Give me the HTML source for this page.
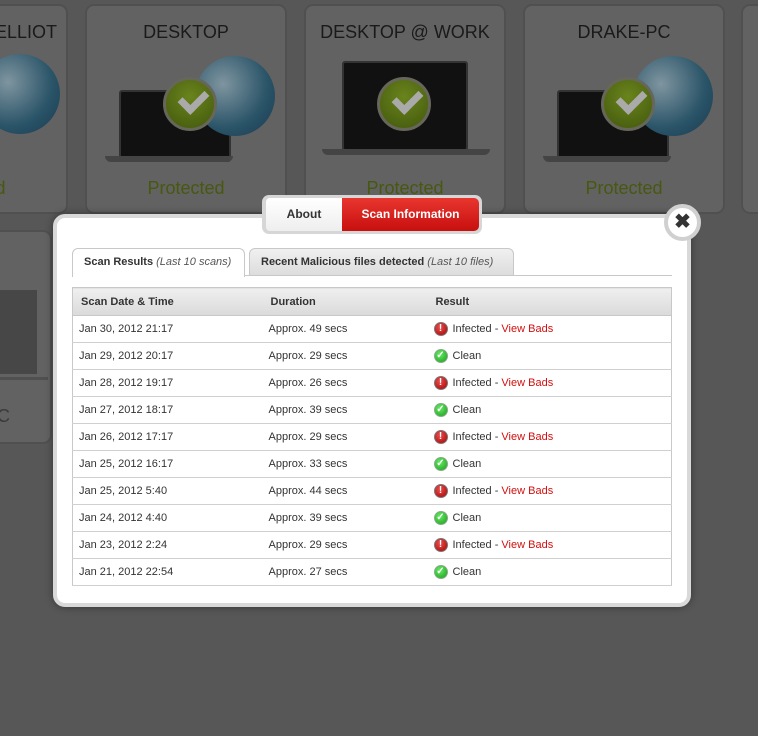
<!DOCTYPE html>
<html><head><meta charset="utf-8"><style>
*{margin:0;padding:0;box-sizing:border-box}
body{width:758px;height:736px;overflow:hidden;background:#575757;font-family:"Liberation Sans",Arial,sans-serif;position:relative}
.card{position:absolute;top:4px;width:202px;height:210px;border:2px solid #505050;border-radius:9px;background:#626262}
.card h3{position:absolute;top:16px;width:100%;text-align:center;font-weight:normal;font-size:18px;color:#1a1a1a}
.card .st{position:absolute;top:172px;width:100%;text-align:center;font-size:18px;color:#475810}
.lap{position:absolute;width:112px;height:72px;background:#111;border:2px solid #333;border-radius:3px}
.base{position:absolute;height:6px;background:#444;border-radius:0 0 6px 6px}
.glb{position:absolute;width:80px;height:80px;border-radius:50%;background:radial-gradient(circle at 35% 35%,#7f95a0,#2a5468 60%,#193a50)}
.chk{position:absolute;width:54px;height:54px;border-radius:50%;background:radial-gradient(circle at 50% 35%,#6a841c,#42570d);border:3px solid #66665a}
.chk:after{content:"";position:absolute;left:14px;top:10px;width:20px;height:11px;border-left:7px solid #aaa;border-bottom:7px solid #aaa;transform:rotate(-45deg)}
.modal{position:absolute;left:53px;top:214px;width:638px;height:393px;background:#fff;border:4px solid #d9d9d9;border-radius:12px;box-shadow:0 0 8px rgba(0,0,0,.4)}
.tabs{position:absolute;left:262px;top:195px;width:220px;height:39px;background:#d6d6d6;border-radius:7px;padding:3px}
.ab{position:absolute;left:4px;top:3px;width:76px;height:33px;background:linear-gradient(#fff,#eee);border-radius:4px 0 0 4px;text-align:center;line-height:33px;font-weight:bold;font-size:12px;color:#333}
.si{position:absolute;left:80px;top:3px;width:137px;height:33px;background:linear-gradient(#e8362e,#c80f0f);border-radius:0 5px 5px 0;text-align:center;line-height:33px;font-weight:bold;font-size:12px;color:#fff}
.close{position:absolute;left:664px;top:204px;width:37px;height:37px;border-radius:50%;background:#fff;border:4px solid #d0d0d0;text-align:center;line-height:28px;font-size:20px;font-weight:bold;color:#333}
.t1,.t2{position:absolute;top:248px;height:28px;border:1px solid #c8c8c8;border-bottom:none;border-radius:6px 6px 0 0;font-size:11px;font-weight:bold;color:#333;line-height:26px;padding-left:11px;white-space:nowrap}
.t1{left:72px;width:173px;background:#fff;height:29px;z-index:2}
.t2{left:249px;width:265px;background:linear-gradient(#f0f0f0,#dcdcdc)}
i{font-weight:normal;color:#555}
.tline{position:absolute;left:72px;top:275px;width:600px;height:1px;background:#c8c8c8}
table{position:absolute;left:72px;top:287px;width:600px;border-collapse:collapse;border:1px solid #c8c8c8;font-size:11px;color:#333}
th{height:28px;text-align:left;background:linear-gradient(#efefef,#dadada);font-weight:bold;padding-left:8px;border-bottom:1px solid #c8c8c8}
td{height:27px;padding-left:6px;border-bottom:1px solid #d0d0d0;vertical-align:middle}
.ic{display:inline-block;width:14px;height:14px;border-radius:50%;vertical-align:middle;margin-right:5px;text-align:center;color:#fff;font-size:10px;line-height:12px;font-weight:bold}
.bad{background:radial-gradient(circle at 40% 35%,#e85050,#a00);border:1px solid #777}
.ok{background:radial-gradient(circle at 40% 35%,#6e6,#1a9a1a);border:1px solid #8a8}
a{color:#d01010;text-decoration:none}
</style></head><body>
<div class="card" style="left:-134px"><h3 style="text-align:left;padding-left:127px">ELLIOT</h3><div class="glb" style="left:112px;top:48px"></div><div class="st">Protected</div></div>
<div class="card" style="left:85px"><h3>DESKTOP</h3><div class="lap" style="left:32px;top:84px"></div><div class="base" style="left:18px;top:150px;width:128px"></div><div class="glb" style="left:108px;top:50px"></div><div class="chk" style="left:76px;top:71px"></div><div class="st">Protected</div></div>
<div class="card" style="left:304px"><h3>DESKTOP @ WORK</h3><div class="lap" style="left:36px;top:55px;width:126px;height:90px"></div><div class="base" style="left:16px;top:143px;width:168px"></div><div class="chk" style="left:71px;top:71px"></div><div class="st">Protected</div></div>
<div class="card" style="left:523px"><h3>DRAKE-PC</h3><div class="lap" style="left:32px;top:84px"></div><div class="base" style="left:18px;top:150px;width:128px"></div><div class="glb" style="left:108px;top:50px"></div><div class="chk" style="left:76px;top:71px"></div><div class="st">Protected</div></div>
<div class="card" style="left:741px"></div>
<div class="card" style="left:-150px;top:230px;width:202px;height:214px"><div style="position:absolute;left:140px;top:58px;width:45px;height:84px;background:#474747"></div><div style="position:absolute;left:136px;top:145px;width:60px;height:3px;background:#505050"></div><div class="st" style="top:174px;left:145px;width:20px;color:#3a3a3a;text-align:left">C</div></div>
<div class="modal"></div>
<div class="tabs"><div class="ab">About</div><div class="si">Scan Information</div></div>
<div class="close">✖</div>
<div class="t1">Scan Results <i>(Last 10 scans)</i></div>
<div class="t2">Recent Malicious files detected <i>(Last 10 files)</i></div>
<div class="tline"></div>
<table>
<tr><th style="width:190px">Scan Date &amp; Time</th><th style="width:165px">Duration</th><th>Result</th></tr>
<tr><td>Jan 30, 2012 21:17</td><td>Approx. 49 secs</td><td><span class="ic bad">!</span>Infected - <a>View Bads</a></td></tr>
<tr><td>Jan 29, 2012 20:17</td><td>Approx. 29 secs</td><td><span class="ic ok">✓</span>Clean</td></tr>
<tr><td>Jan 28, 2012 19:17</td><td>Approx. 26 secs</td><td><span class="ic bad">!</span>Infected - <a>View Bads</a></td></tr>
<tr><td>Jan 27, 2012 18:17</td><td>Approx. 39 secs</td><td><span class="ic ok">✓</span>Clean</td></tr>
<tr><td>Jan 26, 2012 17:17</td><td>Approx. 29 secs</td><td><span class="ic bad">!</span>Infected - <a>View Bads</a></td></tr>
<tr><td>Jan 25, 2012 16:17</td><td>Approx. 33 secs</td><td><span class="ic ok">✓</span>Clean</td></tr>
<tr><td>Jan 25, 2012 5:40</td><td>Approx. 44 secs</td><td><span class="ic bad">!</span>Infected - <a>View Bads</a></td></tr>
<tr><td>Jan 24, 2012 4:40</td><td>Approx. 39 secs</td><td><span class="ic ok">✓</span>Clean</td></tr>
<tr><td>Jan 23, 2012 2:24</td><td>Approx. 29 secs</td><td><span class="ic bad">!</span>Infected - <a>View Bads</a></td></tr>
<tr><td>Jan 21, 2012 22:54</td><td>Approx. 27 secs</td><td><span class="ic ok">✓</span>Clean</td></tr>
</table>
</body></html>
